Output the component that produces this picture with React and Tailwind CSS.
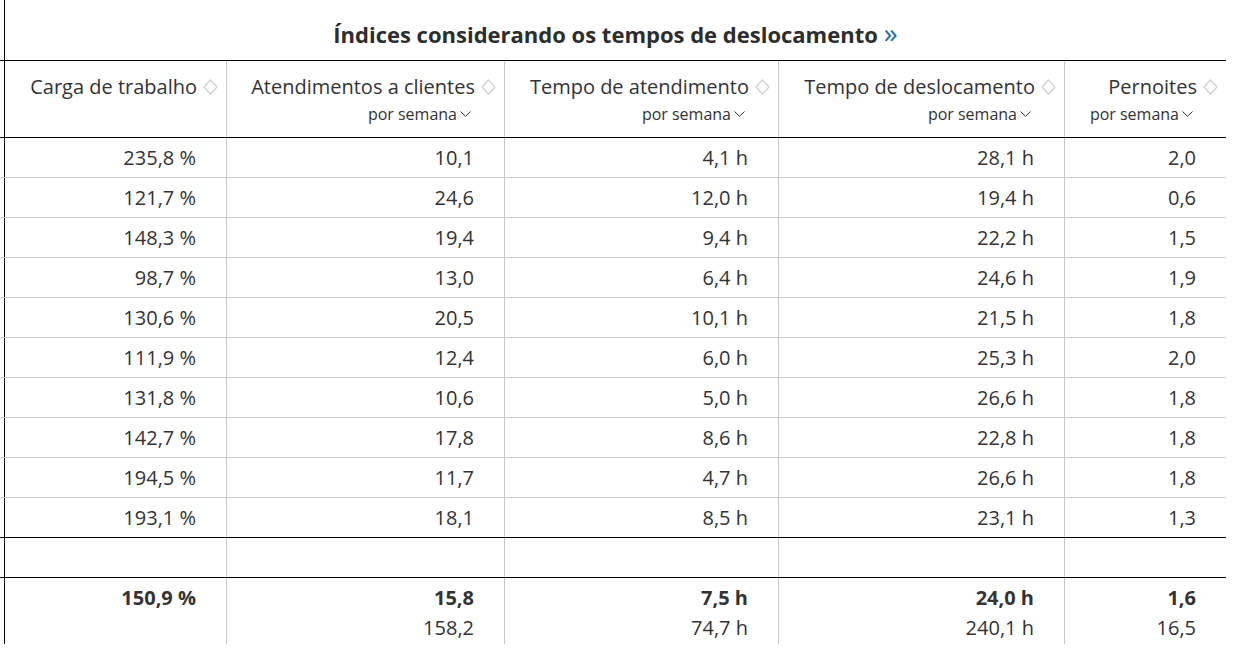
import React from 'react';

const ROWS = [
  ['235,8 %', '10,1', '4,1 h', '28,1 h', '2,0'],
  ['121,7 %', '24,6', '12,0 h', '19,4 h', '0,6'],
  ['148,3 %', '19,4', '9,4 h', '22,2 h', '1,5'],
  ['98,7 %', '13,0', '6,4 h', '24,6 h', '1,9'],
  ['130,6 %', '20,5', '10,1 h', '21,5 h', '1,8'],
  ['111,9 %', '12,4', '6,0 h', '25,3 h', '2,0'],
  ['131,8 %', '10,6', '5,0 h', '26,6 h', '1,8'],
  ['142,7 %', '17,8', '8,6 h', '22,8 h', '1,8'],
  ['194,5 %', '11,7', '4,7 h', '26,6 h', '1,8'],
  ['193,1 %', '18,1', '8,5 h', '23,1 h', '1,3'],
];

const TOTALS = [
  ['150,9 %', ''],
  ['15,8', '158,2'],
  ['7,5 h', '74,7 h'],
  ['24,0 h', '240,1 h'],
  ['1,6', '16,5'],
];

const HEADERS = [
  { label: 'Carga de trabalho', sub: false },
  { label: 'Atendimentos a clientes', sub: true },
  { label: 'Tempo de atendimento', sub: true },
  { label: 'Tempo de deslocamento', sub: true },
  { label: 'Pernoites', sub: true },
];

// column widths + left borders (first one is the frozen column edge)
const COLS = [
  'w-[222px] border-l border-black',
  'w-[278px] border-l border-[#c3cacf]',
  'w-[274px] border-l border-[#c3cacf]',
  'w-[286px] border-l border-[#c3cacf]',
  'w-[162px] border-l border-[#c3cacf]',
];

function SortIcon() {
  return (
    <svg width="15" height="16" viewBox="0 0 15 16" className="ml-[6px] shrink-0">
      <path d="M7.5 0.8 L14 8 L7.5 15.2 L1 8 Z" fill="none" stroke="#cdcdcd" strokeWidth="1.2" />
    </svg>
  );
}

function Chevron() {
  return (
    <svg width="11" height="6" viewBox="0 0 11 6" className="ml-[3px] shrink-0">
      <path d="M0.5 0.5 L5.5 5.3 L10.5 0.5" fill="none" stroke="#333" strokeWidth="1" />
    </svg>
  );
}

function Row({ className = '', children }) {
  return (
    <div className={`flex w-[1226px] ${className}`}>
      <div className="w-[4px] shrink-0" />
      {children}
    </div>
  );
}

export default function App() {
  return (
    <div className="bg-white w-[1235px] h-[651px] overflow-hidden text-[#333] font-['Open_Sans',sans-serif]">
      {/* Title */}
      <Row className="border-b border-black h-[61px]">
        <div className="flex-1 border-l border-black flex justify-center pt-[17px]">
          <span className="flex items-baseline text-[22px] leading-[30px] font-bold text-[#2d2d2d]">
            Índices considerando os tempos de deslocamento
            <span className="ml-[6px] font-normal text-[28px] leading-[30px] text-[#1e6ea6]">»</span>
          </span>
        </div>
      </Row>

      {/* Column headers */}
      <Row className="border-b border-black h-[77px]">
        {HEADERS.map((h, i) => (
          <div key={i} className={`${COLS[i]} shrink-0 flex flex-col items-end pr-[8px] pt-[12px]`}>
            <div className="flex items-center text-[20px] leading-[27px]">
              {h.label}
              <SortIcon />
            </div>
            {h.sub && (
              <div className="flex items-center mt-[3px] mr-[25px] text-[16px] leading-[22px]">
                por semana
                <Chevron />
              </div>
            )}
          </div>
        ))}
      </Row>

      {/* Data */}
      {ROWS.map((r, ri) => (
        <Row key={ri} className={`h-[40px] border-b ${ri === ROWS.length - 1 ? 'border-black' : 'border-[#cccccc]'}`}>
          {r.map((v, ci) => (
            <div key={ci} className={`${COLS[ci]} shrink-0 flex items-center justify-end pr-[30px] text-[20px]`}>
              {v}
            </div>
          ))}
        </Row>
      ))}

      {/* Empty row */}
      <Row className="h-[40px] border-b border-black">
        {COLS.map((c, ci) => (
          <div key={ci} className={`${c} shrink-0`} />
        ))}
      </Row>

      {/* Totals */}
      <Row className="h-[66px]">
        {TOTALS.map((t, ci) => (
          <div key={ci} className={`${COLS[ci]} shrink-0 flex flex-col items-end pr-[30px] pt-[5px] text-[20px]`}>
            <div className="h-[30px] leading-[30px] font-bold">{t[0]}</div>
            {t[1] && <div className="h-[30px] leading-[30px]">{t[1]}</div>}
          </div>
        ))}
      </Row>
    </div>
  );
}
